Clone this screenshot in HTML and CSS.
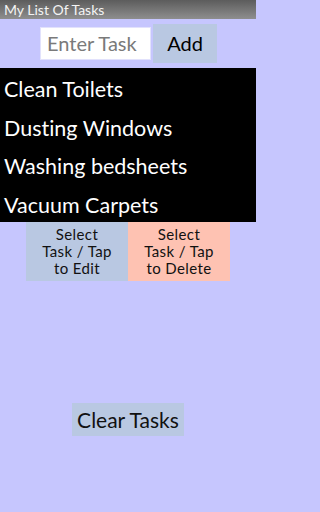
FILE: index.html
```html
<!DOCTYPE html>
<html>
<head>
<meta charset="utf-8">
<link rel="stylesheet" href="styles.css">
</head>
<body>
<div class="titlebar">My List Of Tasks</div>
<div class="entry">
  <div class="input">Enter Task</div>
  <div class="add">Add</div>
</div>
<div class="list">
  <div class="row">Clean Toilets</div>
  <div class="row">Dusting Windows</div>
  <div class="row">Washing bedsheets</div>
  <div class="row">Vacuum Carpets</div>
</div>
<div class="actions">
  <div class="btn edit">Select<br>Task / Tap<br>to Edit</div>
  <div class="btn delete">Select<br>Task / Tap<br>to Delete</div>
</div>
<div class="clearwrap">
  <div class="clear">Clear Tasks</div>
</div>
</body>
</html>
```
FILE: styles.css
```css
html, body {
  margin: 0;
  padding: 0;
}
body {
  width: 256px;
  height: 512px;
  background: #c6c6fe;
  font-family: Lato, "Noto Sans", sans-serif;
  font-variant-ligatures: none;
  overflow: hidden;
}
.titlebar {
  height: 19px;
  background: linear-gradient(#5c5c5c, #8e8e8e);
  color: #f4f4f4;
  font-size: 14px;
  line-height: 20px;
  padding-left: 4px;
  box-sizing: border-box;
}
.entry {
  display: flex;
  justify-content: center;
  align-items: center;
  gap: 2px;
  margin-top: 5px;
  margin-bottom: 5px;
  padding-left: 1px;
}
.input {
  width: 111px;
  height: 33px;
  box-sizing: border-box;
  background: #ffffff;
  border: 1px solid #e2e2fc;
  color: #7a7a7a;
  font-size: 20px;
  line-height: 31px;
  padding-left: 6px;
  white-space: nowrap;
}
.add {
  width: 64px;
  height: 39px;
  background: #b9c8e2;
  color: #000;
  font-size: 20px;
  line-height: 39px;
  text-align: center;
}
.list {
  background: #000;
  height: 154px;
}
.row {
  height: 38.5px;
  line-height: 42px;
  color: #ffffff;
  font-size: 21.5px;
  padding-left: 4px;
  white-space: nowrap;
}
.actions {
  display: flex;
  justify-content: center;
}
.btn {
  width: 102px;
  height: 59px;
  box-sizing: border-box;
  text-align: center;
  font-size: 15px;
  letter-spacing: 0.4px;
  line-height: 17px;
  padding-top: 4px;
  color: #111;
}
.edit {
  background: #b9c8e2;
}
.delete {
  background: #fec2b2;
}
.clearwrap {
  display: flex;
  justify-content: center;
  margin-top: 122px;
}
.clear {
  width: 112px;
  height: 33px;
  background: #b9c8e2;
  color: #111;
  font-size: 21px;
  line-height: 34px;
  text-align: center;
}
```
